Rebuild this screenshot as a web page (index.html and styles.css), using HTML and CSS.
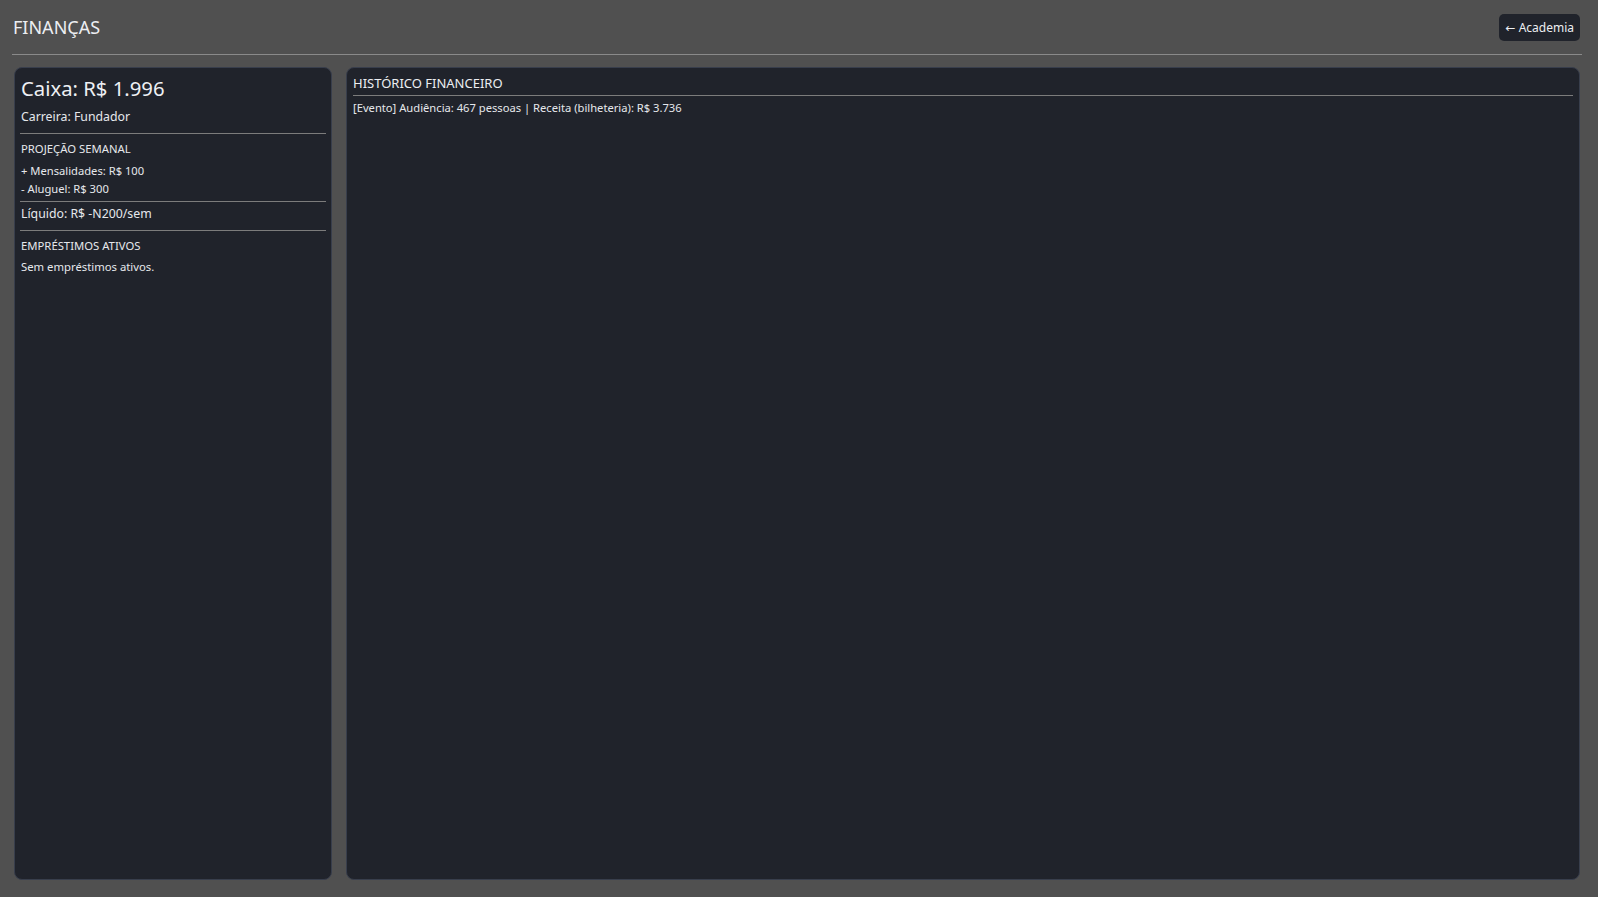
FILE: index.html
```html
<!DOCTYPE html>
<html lang="pt-BR">
<head>
<meta charset="utf-8">
<title>Finanças</title>
<link rel="stylesheet" href="styles.css">
</head>
<body>
<div class="app">
  <header class="header">
    <h1 class="title">FINANÇAS</h1>
    <button class="back-btn">← Academia</button>
  </header>
  <main class="panels">
    <section class="panel panel-left">
      <div class="cash">Caixa: R$ 1.996</div>
      <div class="career">Carreira: Fundador</div>
      <hr class="sep sep-1">
      <div class="sec-title sec-proj">PROJEÇÃO SEMANAL</div>
      <div class="rows">
        <div class="row">+ Mensalidades: R$ 100</div>
        <div class="row">- Aluguel: R$ 300</div>
      </div>
      <hr class="sep sep-2">
      <div class="net">Líquido: R$ -N200/sem</div>
      <hr class="sep sep-3">
      <div class="sec-title sec-loans">EMPRÉSTIMOS ATIVOS</div>
      <div class="empty">Sem empréstimos ativos.</div>
    </section>
    <section class="panel panel-right">
      <div class="hist-title">HISTÓRICO FINANCEIRO</div>
      <div class="hist-item">[Evento] Audiência: 467 pessoas | Receita (bilheteria): R$ 3.736</div>
    </section>
  </main>
</div>
</body>
</html>
```

FILE: styles.css
```css
* { box-sizing: border-box; }
html, body { margin: 0; padding: 0; height: 100%; }
body {
  background: #505050;
  color: #e6e8ec;
  font-family: "Noto Sans", "Open Sans", "DejaVu Sans", sans-serif;
}
.app {
  height: 100vh;
  padding: 12px 16px 17px 12px;
  display: flex;
  flex-direction: column;
}
.header {
  display: flex;
  justify-content: space-between;
  align-items: flex-start;
  height: 43px;
  padding: 2px 2px 0 1px;
  border-bottom: 1px solid #8a8a8a;
}
.title {
  margin: 0;
  font-size: 18px;
  font-weight: 400;
  line-height: 26px;
  color: #eceef2;
}
.back-btn {
  font-family: inherit;
  font-size: 12px;
  line-height: 17px;
  padding: 5px 6px;
  background: #20232b;
  color: #eceef2;
  border: none;
  border-radius: 5px;
}
.panels {
  flex: 1;
  display: flex;
  gap: 14px;
  margin-top: 12px;
  padding: 0 2px;
  min-height: 0;
}
.panel {
  background: #20232b;
  border: 1px solid #383e4c;
  border-radius: 8px;
}
.panel-left {
  width: 318px;
  flex: none;
  padding: 6px 6px 6px;
}
.panel-right {
  flex: 1;
  padding: 6px 6px;
}
.cash {
  font-size: 20.3px;
  line-height: 28px;
  color: #eef0f4;
}
.career {
  font-size: 12.3px;
  line-height: 17px;
  margin-top: 6px;
}
.sep {
  border: none;
  border-top: 1px solid #7c7c7c;
  margin: 0 -1px;
  height: 0;
}
.sep-1 { margin-top: 8px; }
.sec-title {
  font-size: 11.3px;
  line-height: 16px;
}
.sec-proj { margin-top: 7px; }
.rows { margin-top: 5px; }
.row {
  font-size: 11.2px;
  line-height: 17.7px;
}
.sep-2 { margin-top: 3.6px; }
.net {
  font-size: 12.3px;
  line-height: 17px;
  margin-top: 2.5px;
}
.sep-3 { margin-top: 8px; }
.sec-loans { margin-top: 7px; }
.empty {
  font-size: 11.3px;
  line-height: 16px;
  margin-top: 5.7px;
}
.hist-title {
  font-size: 13px;
  line-height: 18px;
  padding-bottom: 3px;
  border-bottom: 1px solid #7c7c7c;
  color: #eceef2;
}
.hist-item {
  font-size: 11.2px;
  line-height: 16px;
  margin-top: 4px;
}
```
